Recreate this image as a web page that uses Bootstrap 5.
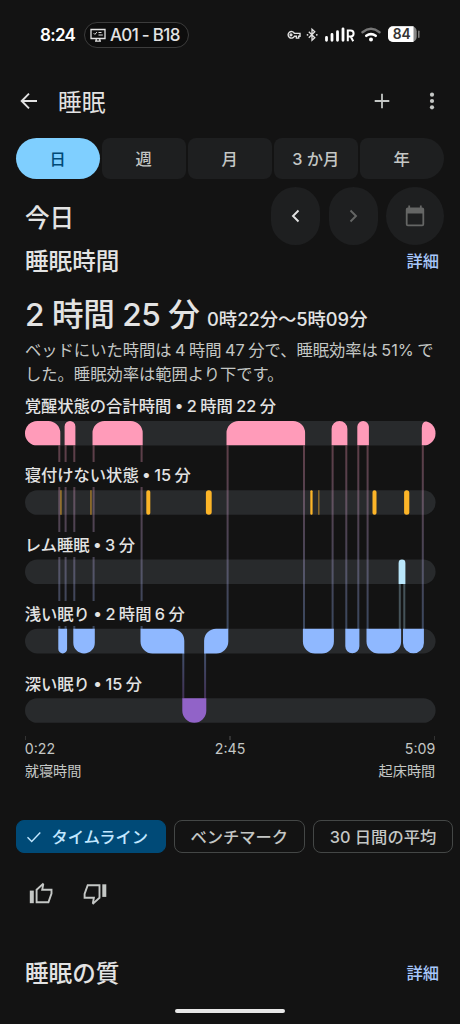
<!DOCTYPE html>
<html lang="ja" data-bs-theme="dark">
<head>
<meta charset="utf-8">
<meta name="viewport" content="width=device-width, initial-scale=1">
<title>睡眠</title>
<link href="https://cdn.jsdelivr.net/npm/bootstrap@5.3.0/dist/css/bootstrap.min.css" rel="stylesheet">
<style>
body{background:#131313;color:#e3e3e3;font-family:Inter,"Noto Sans CJK JP",sans-serif;font-size:16.3px;line-height:24px}
h1,h2,h3{color:#e3e3e3}
.screen{width:460px;height:1024px}
svg{display:block;flex:none}
.statusbar{height:70px;padding:0 40.5px 0 40px;color:#fff}
.clock{font-size:17px;font-weight:600;width:44px;letter-spacing:-.7px}
.room{height:26px;width:105px;border:1px solid #3c3c3c;padding-left:5px;background:#0d0d0d;font-size:17px;letter-spacing:-.7px;font-weight:500;color:#e3e3e3}
.appbar{height:62px;padding:0 18px 0 19px}
.appbar h1{font-size:23.7px;line-height:32px;margin:3px 0 0 19px;font-weight:400}
.ranges{height:41px;margin:6px 16.5px 0 16px;gap:2.5px}
.ranges .btn{flex:1 1 0;background:#1e1f20;color:#c4c7c5;border-radius:8px;font-size:16.3px;font-weight:500;padding:2px 0 0;border:0}
.ranges .btn.active{background:#7fcfff;color:#004a77;border-radius:21px}
.ranges .btn:last-child{border-radius:8px 21px 21px 8px}
.dayrow{height:58px;margin:8px 16.5px 0 25px}
.dayrow h2{font-size:24.6px;font-weight:500;line-height:32px;margin:4px 0 0}
.controls{gap:8.4px}
.round{width:49.2px;height:58px;border-radius:25px;background:#1e1f20;border:0;padding:0;display:flex;align-items:center;justify-content:center}
.round.cal{width:57.2px;border-radius:29px}
.sect{height:32px;margin:0 21px 0 25px}
.sect h3{font-size:23.6px;font-weight:500;line-height:32px;margin:2px 0 0}
.sect a{color:#a8c7fa;text-decoration:none;font-weight:500}
.total{height:50px;margin:11px 25px 0;line-height:54px;white-space:nowrap}
.total b{font-size:31.6px;font-weight:500;letter-spacing:-.45px}
.total span{font-size:18.3px;font-weight:500;margin-left:3px}
.about{margin:-.5px 20px 0 25px;color:#c4c7c5;line-height:24.4px;height:55.5px;white-space:nowrap;font-weight:400;word-spacing:-1.1px}
.chart{height:342px;margin:0 24.7px}
.chart svg{position:absolute;left:0;top:0}
.stage{position:relative;height:69.4px}
.stage span{display:inline-block;background:#131313;font-weight:500;height:25px;line-height:26px;white-space:nowrap;vertical-align:top;word-spacing:-.9px}
.axis{margin:1px 24.7px 0;font-size:14.2px;line-height:21.5px;color:#c4c7c5}
.axis i{width:1.5px;height:4px;background:#333;display:block}
.axis .row{margin-top:-2px}
.chips{margin:39.3px 7px 0 16px;gap:8px;height:33px}
.chips .btn{height:33px;padding:0;border:1px solid #444746;border-radius:8px;color:#c4c7c5;font-size:16.3px;line-height:31px;font-weight:500;white-space:nowrap;display:flex;align-items:center;justify-content:center}
.chips .btn span{position:relative;top:1px}
.chips .btn.active{background:#004a77;border-color:#004a77;color:#c2e7ff;justify-content:flex-start;padding-left:9px}
.thumbs{margin:25px 0 0 25px;height:32px;gap:21.5px}
.pill{width:110px;height:4px;background:#e8e8e8;margin:20px auto 0}
</style>
</head>
<body>
<main class="screen overflow-hidden d-flex flex-column">
<header class="statusbar d-flex align-items-center">
  <span class="clock">8:24</span>
  <span class="room rounded-pill d-flex align-items-center gap-1">
    <svg width="16" height="14" viewBox="0 0 16 14" fill="none" stroke="#e3e3e3" stroke-width="1.3"><path d="M1 1.500h14v9H1zM5 13.200h6M6.200 11v2M9.800 11v2"/><path d="M3.700 5.200l1.200 1.200 2-2.300M8.500 4.500h3M8.500 7h4.300" stroke-width="1"/></svg>
    <span>A01 - B18</span>
  </span>
  <span class="ms-auto d-flex align-items-center">
    <svg width="134" height="18" viewBox="286 26 134 18">
      <g fill="none" stroke="#e3e3e3" stroke-width="1.4"><path d="M294.4 33.4H300v2.8h-1.3v1.9h-2.3v-1.9h-2a3.3 3.3 0 1 1 0-2.8z"/><circle cx="291" cy="34.8" r=".9"/><path d="M308.8 31.7l6 6-2.8 2.6V29.2l2.8 2.6-6 6" stroke-width="1.3"/></g>
      <g fill="#e3e3e3"><circle cx="307.5" cy="34.8" r=".9"/><circle cx="316.8" cy="34.8" r=".9"/></g>
      <path d="M326.5 37.3v3M332 34.5v5.8M337.5 31.7v8.6M343 28.8v11.5" stroke="#fff" stroke-width="2.8" stroke-linecap="round"/>
      <path d="M347.8 41.2V30.5h2.8a2.8 2.8 0 0 1 0 6h-2.8M350.7 36.5l2.5 4.7" fill="none" stroke="#fff" stroke-width="2"/>
      <path d="M362.5 32.2q8.5-6.8 17 0" fill="none" stroke="#777" stroke-width="2.4" stroke-linecap="round"/>
      <path d="M366.3 35.8q4.7-3.4 9.4 0" fill="none" stroke="#fff" stroke-width="2.6" stroke-linecap="round"/><circle cx="371" cy="39.4" r="2" fill="#fff"/>
      <rect x="388" y="26.3" width="28.7" height="15.7" rx="5" fill="#888"/><path d="M393 26.3h20.5V42H393a5 5 0 0 1-5-5v-5.700a5 5 0 0 1 5-5z" fill="#fff"/><path d="M418.800 31.200v6" stroke="#777" stroke-width="1.6" stroke-linecap="round"/>
      <text x="401.800" y="39.300" text-anchor="middle" font-size="13.800" font-weight="600" fill="#333" font-family="Inter, sans-serif">84</text>
    </svg>
  </span>
</header>

<nav class="appbar d-flex align-items-center">
  <svg width="20" height="20" viewBox="0 0 20 20" fill="none" stroke="#e3e3e3" stroke-width="1.9"><path d="M18 10H3M10 2.700L2.700 10l7.300 7.300"/></svg>
  <h1>睡眠</h1>
  <svg class="ms-auto" width="16" height="16" viewBox="0 0 16 16" stroke="#c4c7c5" stroke-width="1.800"><path d="M8 .7v14.600M.7 8h14.600"/></svg>
  <svg style="margin-left:38.500px;margin-right:7.500px" width="6" height="18" viewBox="0 0 6 18" fill="#c4c7c5"><circle cx="3" cy="2.700" r="2.100"/><circle cx="3" cy="9" r="2.100"/><circle cx="3" cy="15.300" r="2.100"/></svg>
</nav>

<div class="ranges d-flex">
  <button class="btn active">日</button><button class="btn">週</button><button class="btn">月</button><button class="btn">3 か月</button><button class="btn">年</button>
</div>

<div class="dayrow d-flex align-items-center">
  <h2>今日</h2>
  <div class="controls ms-auto d-flex">
    <button class="round"><svg width="10" height="14" viewBox="0 0 10 14" fill="none" stroke="#e3e3e3" stroke-width="1.900"><path d="M7.500 1.500L2 7l5.500 5.500"/></svg></button>
    <button class="round"><svg width="10" height="14" viewBox="0 0 10 14" fill="none" stroke="#656665" stroke-width="1.900"><path d="M2.500 1.500L8 7l-5.500 5.500"/></svg></button>
    <button class="round cal"><svg width="20" height="22" viewBox="0 0 20 22" fill="#656665"><path fill-rule="evenodd" d="M3.300.500h1.800v2h9.800v-2h1.800v2h.5a2 2 0 0 1 2 2v14.700a2 2 0 0 1-2 2H2.800a2 2 0 0 1-2-2V4.500a2 2 0 0 1 2-2h.5zM2.600 8.500v10.900h14.800V8.500z"/></svg></button>
  </div>
</div>

<div class="sect d-flex align-items-center justify-content-between"><h3>睡眠時間</h3><a href="#">詳細</a></div>
<div class="total"><b>2 時間 25 分</b> <span>0時22分〜5時09分</span></div>
<div class="about">ベッドにいた時間は 4 時間 47 分で、睡眠効率は 51% で<br>した。睡眠効率は範囲より下です。</div>

<section class="chart position-relative">
  <svg width="411" height="342" viewBox="24.700 393 411 342">
    <defs>
      <linearGradient id="fall" gradientUnits="userSpaceOnUse" x1="0" y1="445" x2="0" y2="629"><stop stop-color="#ff9bb9"/><stop offset="1" stop-color="#8fb8ff"/></linearGradient>
      <linearGradient id="sink" gradientUnits="userSpaceOnUse" x1="0" y1="653" x2="0" y2="698"><stop stop-color="#8fb8ff"/><stop offset="1" stop-color="#9163c8"/></linearGradient>
      <clipPath id="lane"><rect x="24.700" y="421" width="410.600" height="24.600" rx="12.300"/></clipPath>
    </defs>
    <g fill="#282a2c">
      <rect x="24.700" y="421" width="410.600" height="24.600" rx="12.300"/><rect x="24.700" y="490.200" width="410.600" height="24.600" rx="12.300"/><rect x="24.700" y="559.500" width="410.600" height="24.600" rx="12.300"/><rect x="24.700" y="628.800" width="410.600" height="24.600" rx="12.300"/><rect x="24.700" y="698.200" width="410.600" height="24.600" rx="12.300"/>
    </g>
    <g fill="url(#fall)" opacity=".32">
      <path d="M58 445.600h2V629h-2zM64.300 445.600h2V629h-2zM73 445.600h2V629h-2zM92.300 445.600h2V629h-2zM140.300 445.600h2V629h-2zM226.300 445.600h2V629h-2zM302.700 445.600h2V629h-2zM331.300 445.600h2V629h-2zM345 445.600h2V629h-2zM357 445.600h2V629h-2zM366.300 445.600h2V629h-2zM421.500 445.600h2V629h-2z"/>
    </g>
    <path d="M399.500 584v45M404 584v45" stroke="#b9e6fb" stroke-width="2" opacity=".3"/>
    <path d="M182 653h2v45.500h-2zM203.800 653h2v45.500h-2z" fill="url(#sink)" opacity=".36"/>
    <g fill="#ff9bb9" clip-path="url(#lane)">
      <path d="M24 421h24a12 12 0 0 1 12 12v12.600H24zM64.300 445.600V426.400a5.400 5.400 0 0 1 10.800 0v19.200zM92.200 445.600V433a12 12 0 0 1 12-12h26.200a12 12 0 0 1 12 12v12.600zM226.200 445.600V433a12 12 0 0 1 12-12h54.600a12 12 0 0 1 12 12v12.600zM331.300 445.600V428.900a7.900 7.900 0 0 1 15.800 0v16.700zM357 445.600V426.800a5.800 5.800 0 0 1 11.600 0v18.800zM421.500 445.600V428q0-6.500 5-7h9v24.600z"/>
    </g>
    <g fill="#fdb528">
      <rect x="60" y="490.200" width="1.300" height="24.600" opacity=".65"/><rect x="90" y="490.200" width="1.300" height="24.600" opacity=".65"/>
      <rect x="146" y="490.200" width="4" height="24.600" rx="1.800"/><rect x="205.600" y="490.200" width="5.800" height="24.600" rx="2.800"/><rect x="310" y="490.200" width="2.300" height="24.600" rx="1"/><rect x="318" y="490.200" width="1.100" height="24.600" opacity=".65"/><rect x="372.200" y="490.200" width="4" height="24.600" rx="1.800"/><rect x="403.800" y="490.200" width="5.200" height="24.600" rx="2.500"/>
    </g>
    <path d="M398.300 584.100V562.900a3.400 3.400 0 0 1 6.800 0v21.200z" fill="#b9e6fb"/>
    <g fill="#8fb8ff">
      <path d="M58 628.800h8.800v20.200a4.400 4.400 0 0 1-8.800 0zM73 628.800h21.500v13.900a10.750 10.750 0 0 1-21.500 0zM140.200 628.800H172a12 12 0 0 1 12 12v12.600h-31.800a12 12 0 0 1-12-12zM203.800 653.400v-12.600a12 12 0 0 1 12-12H228v12.600a12 12 0 0 1-12 12zM302.600 628.800h31v12.600a12 12 0 0 1-12 12h-7a12 12 0 0 1-12-12zM345 628.800h14.100v17.500a7.050 7.050 0 0 1-14.100 0zM366.200 628.800h34.600v12.600a12 12 0 0 1-12 12h-10.600a12 12 0 0 1-12-12zM402.700 628.800h20.900v14.100a10.450 10.450 0 0 1-20.900 0z"/>
    </g>
    <path d="M182 698.200h24v12.500a12 12 0 0 1-24 0z" fill="#9163c8"/>
  </svg>
  <div class="stage"><span>覚醒状態の合計時間 • 2 時間 22 分</span></div>
  <div class="stage"><span>寝付けない状態 • 15 分</span></div>
  <div class="stage"><span>レム睡眠 • 3 分</span></div>
  <div class="stage"><span>浅い眠り • 2 時間 6 分</span></div>
  <div class="stage" style="height:24px"><span>深い眠り • 15 分</span></div>
</section>
<div class="axis">
  <div class="d-flex justify-content-between"><i></i><i></i><i></i></div>
  <div class="row gx-0"><div class="col">0:22<br>就寝時間</div><div class="col text-center">2:45</div><div class="col text-end">5:09<br>起床時間</div></div>
</div>

<div class="chips d-flex">
  <button class="btn active" style="width:149.500px"><svg width="16" height="14" viewBox="0 0 16 14" fill="none" stroke="#c2e7ff" stroke-width="1.400"><path d="M1.500 7.200l4.200 4.200 8.600-9"/></svg><span style="margin-left:9.500px">タイムライン</span></button>
  <button class="btn" style="width:131.500px"><span>ベンチマーク</span></button>
  <button class="btn" style="width:140px"><span>30 日間の平均</span></button>
</div>

<div class="thumbs d-flex align-items-center">
  <svg width="32" height="32" viewBox="25 878 32 32"><path d="M29.800 890.600h4v12.600h-4z" fill="#c4c7c5"/><path d="M36.600 889.700l6.200-5.600.4.500-1 5.200h9.300v3.700l-3.100 8.800H36.600z" fill="none" stroke="#c4c7c5" stroke-width="1.900"/></svg>
  <svg width="32" height="32" viewBox="78.500 878 32 32"><path d="M101.800 884.300h4v12.600h-4z" fill="#c4c7c5"/><path d="M99 897.800l-6.200 5.600-.4-.5 1-5.200h-9.300V894l3.100-8.800H99z" fill="none" stroke="#c4c7c5" stroke-width="1.900"/></svg>
</div>

<div class="sect d-flex align-items-center justify-content-between" style="margin-top:47px"><h3>睡眠の質</h3><a href="#">詳細</a></div>
<div class="pill rounded-pill"></div>
</main>
<script src="https://cdn.jsdelivr.net/npm/bootstrap@5.3.0/dist/js/bootstrap.bundle.min.js"></script>
</body>
</html>
